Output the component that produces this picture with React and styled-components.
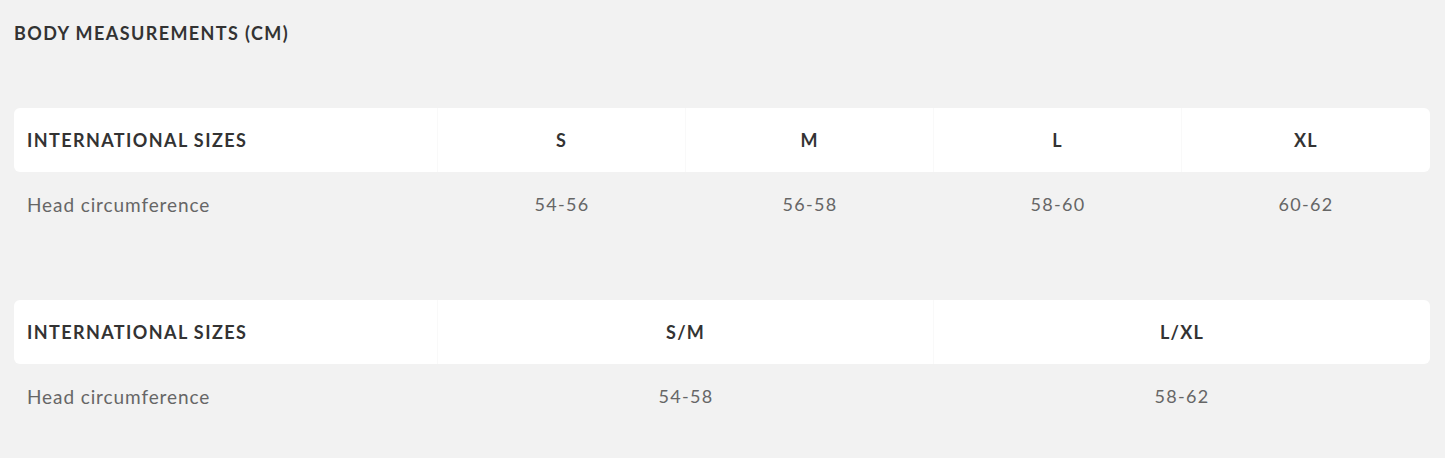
import styled, { createGlobalStyle } from 'styled-components';

const GlobalStyle = createGlobalStyle`
    body {
        margin: 0;
        background: #f2f2f2;
        font-family: Lato, "Open Sans", sans-serif;
        color: #333;
    }
`;

const tables = [
    { sizes: ['S', 'M', 'L', 'XL'], values: ['54-56', '56-58', '58-60', '60-62'] },
    { sizes: ['S/M', 'L/XL'], values: ['54-58', '58-62'] },
];

export default function App(){
    return(
        <Page>
            <GlobalStyle />
            <Title>BODY MEASUREMENTS (CM)</Title>
            {tables.map((t, i) => (
                <Table key={i} $cols={t.sizes.length}>
                    <HeadRow>
                        <HeadLabel>INTERNATIONAL SIZES</HeadLabel>
                        {t.sizes.map((s) => <HeadCell key={s}>{s}</HeadCell>)}
                    </HeadRow>
                    <BodyRow>
                        <BodyLabel>Head circumference</BodyLabel>
                        {t.values.map((v) => <BodyCell key={v}>{v}</BodyCell>)}
                    </BodyRow>
                </Table>
            ))}
        </Page>
    )
}

const Page = styled.div`
    width: 1445px;
    height: 458px;
    padding: 0 15px 0 14px;
    box-sizing: border-box;
    display: flex;
    flex-direction: column;
`;

const Title = styled.h2`
    margin: 22px 0 64px;
    font-size: 18px;
    font-weight: 700;
    letter-spacing: 1.4px;
    color: #333;
    line-height: 22px;
`;

const Table = styled.div`
    display: grid;
    grid-template-columns: 424px repeat(${(p) => p.$cols}, 1fr);
    margin-bottom: 64px;
`;

const HeadRow = styled.div`
    display: contents;
`;

const BodyRow = styled.div`
    display: contents;
`;

const HeadLabel = styled.div`
    background: #fff;
    height: 64px;
    display: flex;
    align-items: center;
    padding-left: 13px;
    font-size: 18px;
    font-weight: 700;
    letter-spacing: 1.4px;
    border-radius: 6px 0 0 6px;
    border-right: 1px solid #f9f9f9;
`;

const HeadCell = styled.div`
    background: #fff;
    height: 64px;
    display: flex;
    align-items: center;
    justify-content: center;
    font-size: 18px;
    font-weight: 700;
    letter-spacing: 1.2px;
    border-right: 1px solid #f9f9f9;

    &:last-child{
        border-radius: 0 6px 6px 0;
        border-right: none;
    }
`;

const BodyLabel = styled.div`
    height: 64px;
    display: flex;
    align-items: center;
    padding-left: 13px;
    font-size: 19px;
    color: #666;
    letter-spacing: 0.9px;
`;

const BodyCell = styled.div`
    height: 64px;
    display: flex;
    align-items: center;
    justify-content: center;
    font-size: 18px;
    color: #666;
    letter-spacing: 1.3px;
`;
